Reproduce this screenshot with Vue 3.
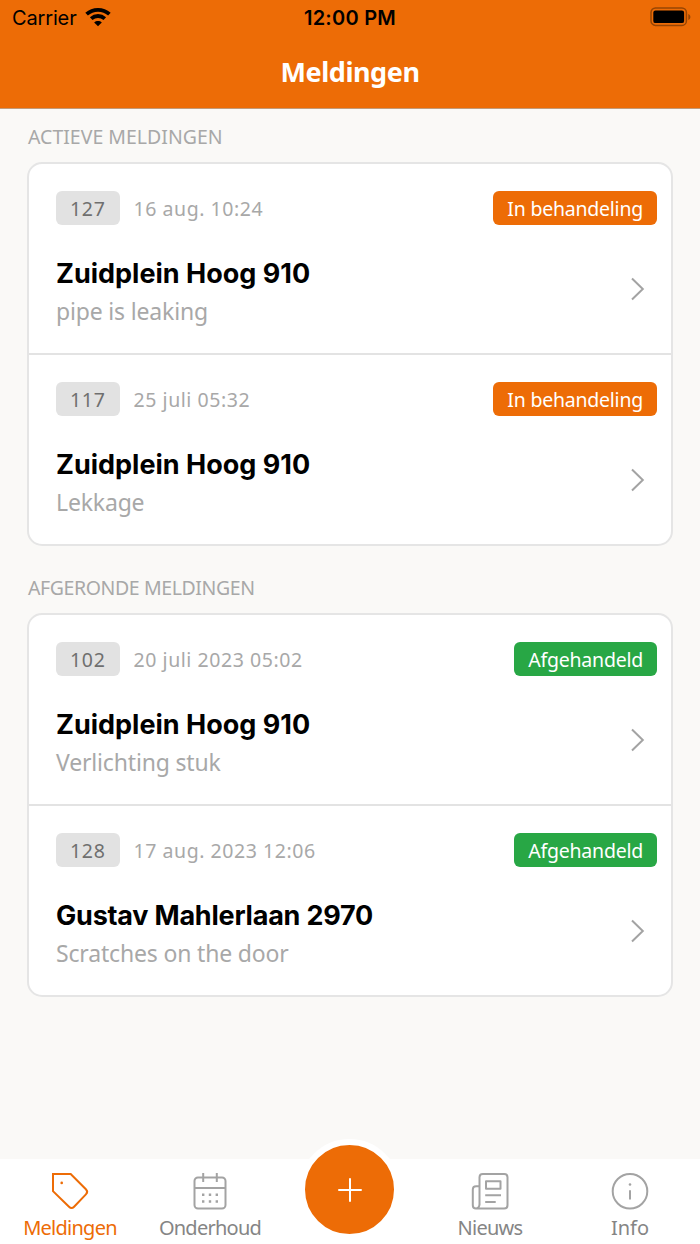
<script setup>
const sections = [
  {
    title: 'ACTIEVE MELDINGEN',
    key: 'active',
    items: [
      { id: '127', date: '16 aug. 10:24', status: 'In behandeling', address: 'Zuidplein Hoog 910', note: 'pipe is leaking' },
      { id: '117', date: '25 juli 05:32', status: 'In behandeling', address: 'Zuidplein Hoog 910', note: 'Lekkage' },
    ],
  },
  {
    title: 'AFGERONDE MELDINGEN',
    key: 'done',
    items: [
      { id: '102', date: '20 juli 2023 05:02', status: 'Afgehandeld', address: 'Zuidplein Hoog 910', note: 'Verlichting stuk' },
      { id: '128', date: '17 aug. 2023 12:06', status: 'Afgehandeld', address: 'Gustav Mahlerlaan 2970', note: 'Scratches on the door' },
    ],
  },
]
</script>

<template>
  <div class="app">
    <header class="header">
      <div class="statusbar">
        <div class="carrier">
          <span>Carrier</span>
          <svg width="26" height="20" viewBox="0 0 26 20" fill="none" stroke="#000" stroke-width="3.8">
            <path d="M1.600 7.200C8 1.300 18 1.300 24.400 7.200" />
            <path d="M6.200 11.700c4-3.600 9.600-3.600 13.600 0" />
            <path d="M13 19.300l-3.800-3.900c2.200-1.900 5.400-1.900 7.600 0z" fill="#000" stroke="none" />
          </svg>
        </div>
        <div class="clock">12:00 PM</div>
        <svg class="battery" width="42" height="20" viewBox="0 0 42 20">
          <rect x="1" y="1" width="35.400" height="17.400" rx="4.500" fill="none" stroke="#964504" stroke-width="1.500" />
          <rect x="3.300" y="3.500" width="30.800" height="12.600" rx="2.200" />
          <path d="M38.300 6.900c2.800 1 2.800 5 0 6z" fill="#964504" />
        </svg>
      </div>
      <h1 class="title">Meldingen</h1>
    </header>

    <main class="content">
      <section v-for="section in sections" :key="section.key" class="section">
        <h2 class="section-title" :class="section.key">{{ section.title }}</h2>
        <div class="card">
          <article v-for="item in section.items" :key="item.id" class="row">
            <div class="meta">
              <span class="number">{{ item.id }}</span>
              <span class="date">{{ item.date }}</span>
              <span class="badge" :class="section.key">{{ item.status }}</span>
            </div>
            <div class="body">
              <div>
                <h3 class="address" :class="{ long: item.address.length > 20 }">{{ item.address }}</h3>
                <p class="note">{{ item.note }}</p>
              </div>
              <svg class="chevron" width="16" height="26" viewBox="0 0 16 26" fill="none" stroke="#a3a3a3" stroke-width="2">
                <path d="M2 2.500L12.800 13 2 23.500" />
              </svg>
            </div>
          </article>
        </div>
      </section>
    </main>

    <nav class="tabs">
      <div class="tab selected">
        <svg width="40" height="40" viewBox="0 0 40 40" fill="none" stroke="currentColor" stroke-width="2">
          <path d="M3 3h17.700l15.200 15.300c1.700 1.700 1.700 3.400 0 5.100L24.100 35.700c-1.700 1.700-3.400 1.700-5.100 0L3 20.200z" />
          <circle cx="11.700" cy="11.900" r="1.300" fill="currentColor" stroke="none" />
        </svg>
        <span>Meldingen</span>
      </div>
      <div class="tab">
        <svg width="40" height="40" viewBox="0 0 40 40" fill="none" stroke="#a3a3a3" stroke-width="2">
          <rect x="4.500" y="6.500" width="31" height="31" rx="3.500" />
          <path d="M4.500 17h31M13.200 2v9M26.800 2v9" />
          <path d="M12 23.800h2.400M18.800 23.800h2.400M25.600 23.800H28M12 30.500h2.400M18.800 30.500h2.400M25.600 30.500H28" stroke-width="2.400" />
        </svg>
        <span>Onderhoud</span>
      </div>
      <div class="tab action">
        <div class="add">
          <svg width="28" height="28" viewBox="0 0 28 28" stroke="#fff" stroke-width="2" stroke-linecap="round">
            <path d="M14 3v22M3 14h22" />
          </svg>
        </div>
      </div>
      <div class="tab">
        <svg width="40" height="40" viewBox="0 0 40 40" fill="none" stroke="#a3a3a3" stroke-width="2" stroke-linejoin="round">
          <path d="M9.500 34V6.300Q9.500 3 12.800 3h21.400q3.300 0 3.300 3.300v27.900q0 3.300-3.300 3.300H6Q2.800 37.500 2.800 34.200V18.500q0-3.300 3.300-3.300h3.400M9.500 33q0 4-3.500 4.500" />
          <path d="M16 10.200h14.500v7.500H16zM15.200 24.200h15.800M15.200 31h10.500" />
        </svg>
        <span>Nieuws</span>
      </div>
      <div class="tab info">
        <svg width="40" height="40" viewBox="0 0 40 40" fill="none" stroke="#a3a3a3" stroke-width="2">
          <circle cx="20" cy="20.300" r="17.300" />
          <circle cx="20" cy="13.500" r="1.300" fill="#a3a3a3" stroke="none" />
          <path d="M20 19.200v9.200" />
        </svg>
        <span>Info</span>
      </div>
    </nav>
  </div>
</template>

<style>
body { margin: 0; }
</style>

<style scoped>
.app {
  display: flex;
  flex-direction: column;
  width: 700px;
  height: 1244px;
  overflow: hidden;
  background: #faf9f7;
  font-family: "Noto Sans", sans-serif;
}
h1, h2, h3, p { margin: 0; font-weight: 400; }
svg { display: block; flex: none; }
.header {
  box-sizing: border-box;
  height: 109px;
  flex: none;
  background: #ed6c06;
  border-bottom: 1px solid #c29a78;
}
.statusbar {
  display: grid;
  grid-template-columns: 1fr auto 1fr;
  height: 36px;
  padding: 0 8px 0 12px;
  align-items: center;
  font-family: Inter, sans-serif;
  font-size: 20px;
}
.carrier { display: flex; align-items: center; gap: 8px; letter-spacing: -0.150px; }
.carrier svg { margin-top: -2px; }
.clock { font-weight: 600; letter-spacing: 0.250px; margin-right: 4px; }
.battery { justify-self: end; margin-top: -2px; }
.title {
  font-size: 27px;
  font-weight: 700;
  line-height: 36px;
  padding-top: 18px;
  color: #fff;
  text-align: center;
  letter-spacing: -0.450px;
}
.content { flex: 1; }
.section-title {
  height: 53px;
  padding-left: 28px;
  line-height: 56px;
  font-size: 19.500px;
  color: #a8a8a8;
}
.section-title.done { letter-spacing: -0.400px; }
.section + .section { padding-top: 14px; }
.card {
  width: 642px;
  margin-left: 27px;
  background: #fff;
  border: 2px solid #e5e5e5;
  border-radius: 15px;
}
.row { box-sizing: border-box; height: 189px; padding: 27px 14px 0 27px; }
.row + .row { border-top: 2px solid #e3e3e3; height: 191px; }
.meta { display: flex; height: 34px; align-items: center; }
.number, .badge {
  height: 34px;
  line-height: 35px;
  border-radius: 6px;
  font-size: 19.500px;
}
.number { padding: 0 14px; background: #e2e2e2; color: #6f6f6f; letter-spacing: 0.700px; }
.date { margin-left: 14px; font-size: 19.500px; color: #a8a8a8; letter-spacing: 0.550px; }
.badge { margin-left: auto; padding: 0 14px; color: #fff; letter-spacing: -0.230px; }
.badge.active { background: #ed6c06; }
.badge.done { background: #28a745; }
.body { display: flex; justify-content: space-between; align-items: center; padding: 29px 11px 0 0; }
.chevron { margin-top: -6px; }
.address { font-family: Inter, sans-serif; font-size: 27px; font-weight: 700; line-height: 40px; }
.address.long { letter-spacing: -0.220px; }
.note { line-height: 36px; margin-top: -1px; font-size: 23px; color: #a8a8a8; letter-spacing: -0.170px; }
.tabs {
  display: grid;
  grid-template-columns: repeat(5, 1fr);
  height: 85px;
  flex: none;
  background: #fff;
}
.tab {
  display: flex;
  flex-direction: column;
  align-items: center;
  padding-top: 12px;
  font-size: 20px;
  line-height: 34px;
  color: #858585;
  letter-spacing: -0.750px;
}
.tab.info { letter-spacing: 0; }
.tab.selected { color: #ed6c06; }
.tab.action { padding: 0 1px 0 0; }
.add {
  display: flex;
  align-items: center;
  justify-content: center;
  width: 89px;
  height: 89px;
  margin-top: -20px;
  border: 6px solid #fff;
  border-radius: 50%;
  background: #ed6c06;
}
</style>
